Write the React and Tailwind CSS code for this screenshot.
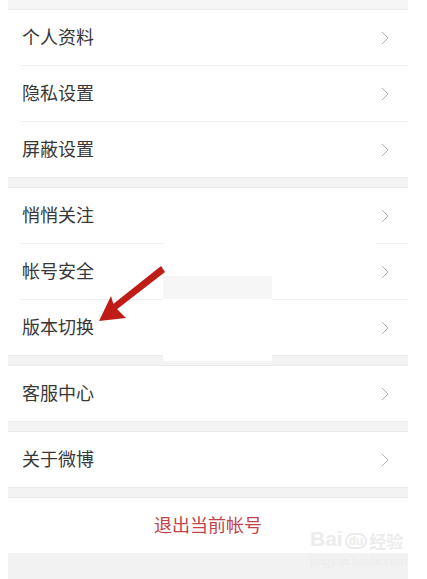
const groups = [
  ['个人资料', '隐私设置', '屏蔽设置'],
  ['悄悄关注', '帐号安全', '版本切换'],
  ['客服中心'],
  ['关于微博'],
];

const Chevron = () => (
  <svg width="8" height="14" viewBox="0 0 8 14" className="shrink-0">
    <polyline points="1,1 7,7 1,13" fill="none" stroke="#b0b0b0" strokeWidth="1" />
  </svg>
);

const Row = ({ label, last }) => (
  <div className="bg-white">
    <div className="flex h-[55px] items-center justify-between pl-[14px] pr-[19px]">
      <span className="-mt-[2px] text-[18px] text-[#383838]">{label}</span>
      <Chevron />
    </div>
    {!last ? <div className="ml-3 h-px bg-[#f0f0f0]" /> : null}
  </div>
);

const Band = () => <div className="h-[11px] border-y border-[#ebebeb] bg-[#f3f3f3]" />;

export default function App() {
  return (
    <div
      className="relative h-[579px] w-[427px] overflow-hidden bg-white"
      style={{ fontFamily: '"Noto Sans CJK SC", "Noto Sans", sans-serif' }}
    >
      <div className="ml-2 flex h-full w-[400px] flex-col bg-[#f2f2f2]">
        <div className="h-[10px] border-b border-[#ebebeb] bg-[#f6f6f6]" />
        {groups.map((group, gi) => (
          <div key={gi}>
            {group.map((label, i) => (
              <Row key={label} label={label} last={i === group.length - 1} />
            ))}
            <Band />
          </div>
        ))}
        <div className="flex h-[55px] items-center justify-center bg-white">
          <span className="-mt-[2px] text-[18px] text-[#c4434b]">退出当前帐号</span>
        </div>
      </div>

      {/* blanked-out patch over the list */}
      <div className="absolute left-[163px] top-[188px] h-[57px] w-[212px] bg-white" />
      <div className="absolute left-[163px] top-[245px] flex h-[116px] w-[109px] flex-col bg-white">
        <div className="mt-[31px] h-[23px] bg-[#f6f6f6]" />
      </div>

      {/* red annotation arrow */}
      <svg className="absolute left-0 top-0" width="427" height="579" viewBox="0 0 427 579">
        <polygon points="161,266 165,272 116,310 112,305" fill="#c01c17" />
        <polygon points="99,321 111,296 114,306 126,318" fill="#c01c17" />
      </svg>

      {/* watermark */}
      <div className="absolute left-[310px] top-[528px] flex flex-col items-start leading-none text-[#ececec]">
        <div className="flex items-end gap-[2px]">
          <span className="text-[21px] font-bold" style={{ fontFamily: '"Liberation Sans", sans-serif' }}>Bai</span>
          <span className="rounded-full border-2 border-[#ececec] px-[2px] text-[12px] font-bold" style={{ fontFamily: '"Liberation Sans", sans-serif' }}>du</span>
          <span className="text-[17px] font-bold">经验</span>
        </div>
        <span className="mt-[5px] text-[13px]" style={{ fontFamily: '"Liberation Serif", serif' }}>jingyan.baidu.com</span>
      </div>
    </div>
  );
}
